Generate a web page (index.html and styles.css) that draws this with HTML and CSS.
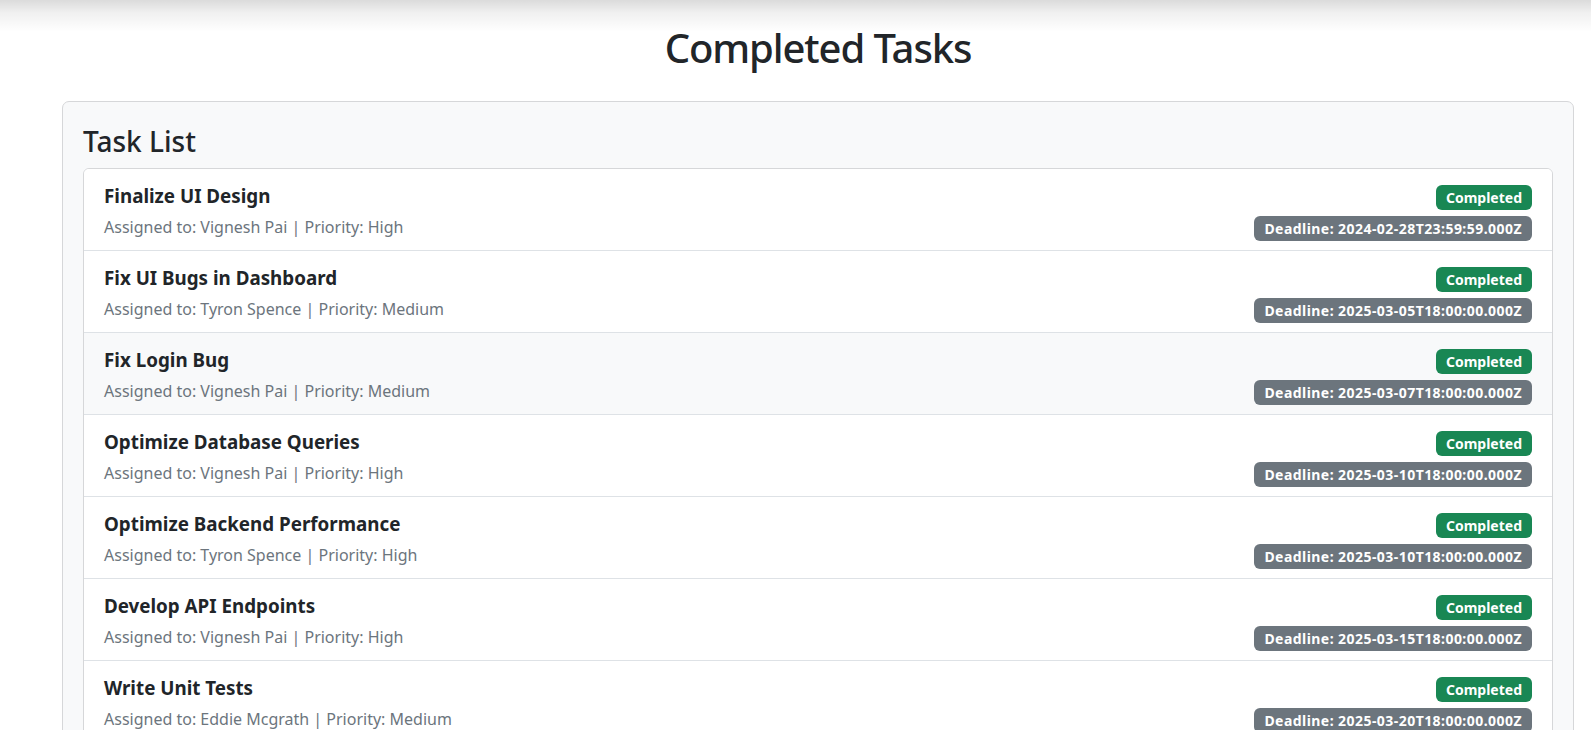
FILE: index.html
```html
<!DOCTYPE html>
<html lang="en">
<head>
<meta charset="utf-8">
<title>Completed Tasks</title>
<link rel="stylesheet" href="styles.css">
</head>
<body>
<div class="top-shadow"></div>
<main class="container">
  <h1 class="page-title">Completed Tasks</h1>
  <section class="card">
    <h3 class="card-title">Task List</h3>
    <ul class="list">
      <li class="item">
        <div class="info">
          <div class="task-name">Finalize UI Design</div>
          <div class="task-meta">Assigned to: Vignesh Pai | Priority: High</div>
        </div>
        <div class="badges">
          <span class="badge badge-success">Completed</span>
          <span class="badge badge-secondary">Deadline: 2024-02-28T23:59:59.000Z</span>
        </div>
      </li>
      <li class="item">
        <div class="info">
          <div class="task-name">Fix UI Bugs in Dashboard</div>
          <div class="task-meta">Assigned to: Tyron Spence | Priority: Medium</div>
        </div>
        <div class="badges">
          <span class="badge badge-success">Completed</span>
          <span class="badge badge-secondary">Deadline: 2025-03-05T18:00:00.000Z</span>
        </div>
      </li>
      <li class="item item-hover">
        <div class="info">
          <div class="task-name">Fix Login Bug</div>
          <div class="task-meta">Assigned to: Vignesh Pai | Priority: Medium</div>
        </div>
        <div class="badges">
          <span class="badge badge-success">Completed</span>
          <span class="badge badge-secondary">Deadline: 2025-03-07T18:00:00.000Z</span>
        </div>
      </li>
      <li class="item">
        <div class="info">
          <div class="task-name">Optimize Database Queries</div>
          <div class="task-meta">Assigned to: Vignesh Pai | Priority: High</div>
        </div>
        <div class="badges">
          <span class="badge badge-success">Completed</span>
          <span class="badge badge-secondary">Deadline: 2025-03-10T18:00:00.000Z</span>
        </div>
      </li>
      <li class="item">
        <div class="info">
          <div class="task-name">Optimize Backend Performance</div>
          <div class="task-meta">Assigned to: Tyron Spence | Priority: High</div>
        </div>
        <div class="badges">
          <span class="badge badge-success">Completed</span>
          <span class="badge badge-secondary">Deadline: 2025-03-10T18:00:00.000Z</span>
        </div>
      </li>
      <li class="item">
        <div class="info">
          <div class="task-name">Develop API Endpoints</div>
          <div class="task-meta">Assigned to: Vignesh Pai | Priority: High</div>
        </div>
        <div class="badges">
          <span class="badge badge-success">Completed</span>
          <span class="badge badge-secondary">Deadline: 2025-03-15T18:00:00.000Z</span>
        </div>
      </li>
      <li class="item">
        <div class="info">
          <div class="task-name">Write Unit Tests</div>
          <div class="task-meta">Assigned to: Eddie Mcgrath | Priority: Medium</div>
        </div>
        <div class="badges">
          <span class="badge badge-success">Completed</span>
          <span class="badge badge-secondary">Deadline: 2025-03-20T18:00:00.000Z</span>
        </div>
      </li>
    </ul>
  </section>
</main>
</body>
</html>
```
FILE: styles.css
```css
* { box-sizing: border-box; }

html, body {
  margin: 0;
  padding: 0;
  overflow: hidden;
  background: #fff;
}

body {
  font-family: "Noto Sans", "Open Sans", sans-serif;
  color: #212529;
  position: relative;
}

.top-shadow {
  position: absolute;
  top: 0;
  left: 0;
  right: 0;
  height: 32px;
  background: linear-gradient(to bottom, rgba(0,0,0,0.14) 0%, rgba(0,0,0,0.06) 40%, rgba(0,0,0,0) 100%);
  pointer-events: none;
}

.container {
  margin: 0 17px 0 62px;
}

.page-title {
  margin: 24px 0 29px;
  font-size: 40px;
  line-height: 48px;
  font-weight: 500;
  letter-spacing: -1.1px;
  text-align: center;
  color: #212529;
}

.card {
  background: #f8f9fa;
  border: 1px solid #d6d7d9;
  border-radius: 7px;
  padding: 22px 20px;
}

.card-title {
  margin: 0 0 10px;
  font-size: 28px;
  line-height: 34px;
  font-weight: 500;
}

.list {
  list-style: none;
  margin: 0;
  padding: 0;
  border: 1px solid #d6d7d9;
  border-radius: 6px;
  overflow: hidden;
}

.item {
  display: flex;
  justify-content: space-between;
  align-items: flex-start;
  padding: 15px 20px 9px;
  background: #fff;
  border-top: 1px solid #dee2e6;
}

.item:first-child {
  border-top: 0;
}

.item-hover {
  background: #f8f9fa;
}

.info {
  padding-bottom: 2px;
}

.task-name {
  font-size: 18.8px;
  line-height: 24px;
  font-weight: 700;
  color: #212529;
  margin-bottom: 7px;
}

.task-meta {
  font-size: 16px;
  line-height: 24px;
  color: #6c757d;
}

.badges {
  display: flex;
  flex-direction: column;
  align-items: flex-end;
  gap: 6px;
  margin-top: 1px;
}

.badge {
  display: inline-block;
  font-size: 14px;
  line-height: 1;
  font-weight: 700;
  color: #fff;
  padding: 5.5px 10px;
  border-radius: 6px;
  white-space: nowrap;
}

.badge-success { background: #198754; }
.badge-secondary {
  background: #6c757d;
  letter-spacing: 0.45px;
}
```
